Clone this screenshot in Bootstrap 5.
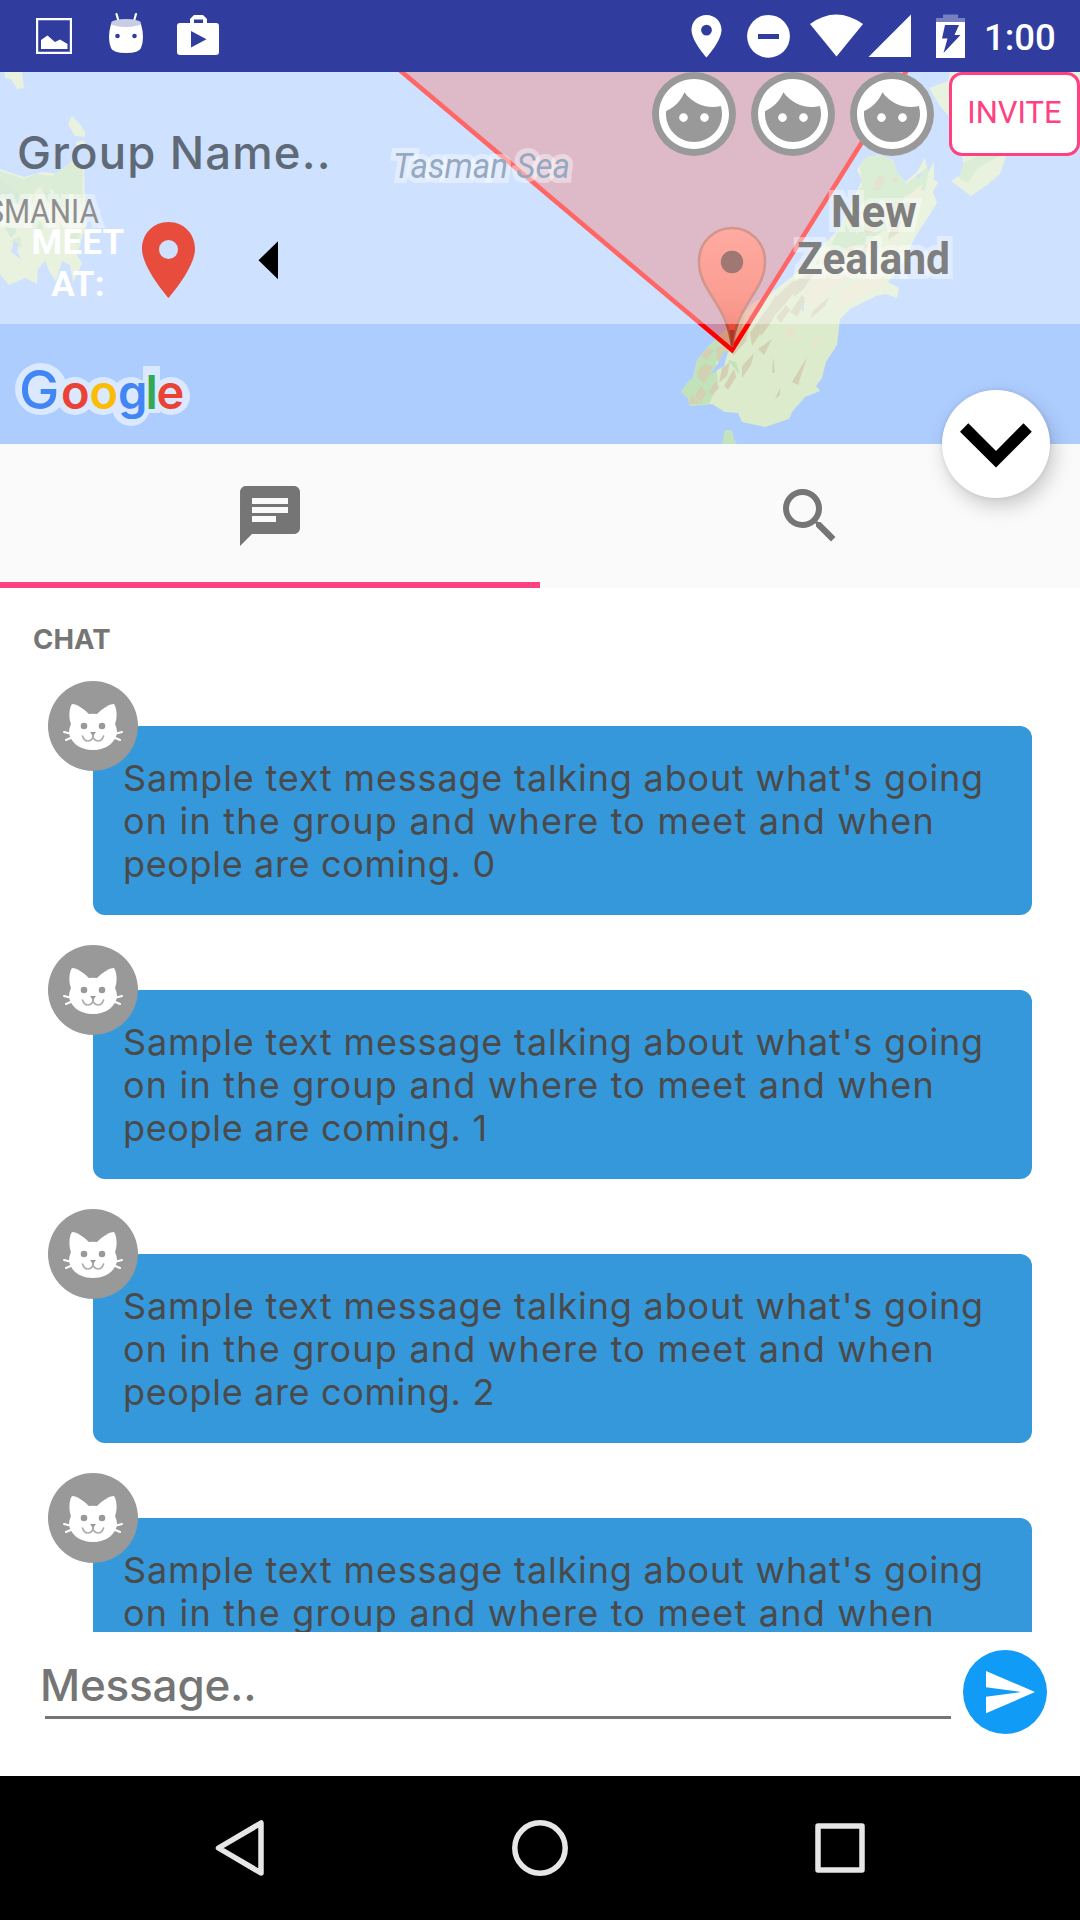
<!DOCTYPE html>
<html lang="en">
<head>
<meta charset="utf-8">
<meta name="viewport" content="width=device-width, initial-scale=1">
<title>Group chat</title>
<link href="https://cdn.jsdelivr.net/npm/bootstrap@5.3.0/dist/css/bootstrap.min.css" rel="stylesheet">
<style>
  body { font-family: Roboto, sans-serif; background: #fff; }
  svg { display: block; flex-shrink: 0; }
  .phone { width: 1080px; height: 1920px; }
  .geo { font-family: Inter, sans-serif; }

  .status { height: 72px; background: #303d9f; padding-right: 25px; }
  .status .clock { font-size: 36.5px; font-weight: 500; line-height: 72px; width: 71px; margin-left: -4px; padding-top: 3px; white-space: nowrap; }

  .map-area { height: 372px; background: #aecdff; }
  .map-svg { position: absolute; inset: 0; }
  .glass { height: 252px; background: rgba(255,255,255,.4); }
  .group-name { font-size: 45.5px; font-weight: 500; line-height: 60px; color: #5f6a76; margin: 51px 0 0 17px; width: 635px; letter-spacing: 1.15px; }
  .face { width: 84px; height: 84px; background: #999; margin-right: 15px; }
  .invite { width: 131px; height: 84px; border: 3px solid #ff4081; border-radius: 13px; color: #ff4081; background: #fff; font-size: 31px; padding: 0 0 3px; line-height: 1; }
  .meet { width: 96px; margin: 18px 0 0 30px; font-size: 35px; font-weight: 700; line-height: 42px; letter-spacing: .2px; padding-top: 21px; }

  .fab { position: absolute; left: 942px; top: 390px; width: 108px; height: 108px; z-index: 5; box-shadow: 4px 8px 20px rgba(0,0,0,.2), 0 0 4px rgba(0,0,0,.1); }

  .tabs-row { height: 144px; background: #fafafa; }
  .tabs-row .tab { border-bottom: 6px solid transparent; padding-top: 6px; }
  .tabs-row .tab.on { border-color: #ff4081; }

  .feed { height: 1044px; padding: 32px 48px 0; }
  .feed-title { font-size: 27.5px; font-weight: 700; color: #757575; line-height: 38px; margin: 0 0 23px -15px; letter-spacing: .1px; }
  .msg { height: 234px; margin-bottom: 30px; }
  .avatar { width: 90px; height: 90px; background: #999; z-index: 1; }
  .bubble { width: 939px; height: 189px; margin: -45px 0 0 45px; border-radius: 12px; background: #3498db; color: #4a4a4a; font-size: 36px; font-weight: 400; line-height: 43px; padding: 31px 0 0 30px; white-space: nowrap; }
  .bubble span { display: block; letter-spacing: .83px; }
  .bubble .l2 { letter-spacing: 1.19px; }
  .bubble .l3 { letter-spacing: .65px; }

  .composer { height: 144px; padding: 18px 33px 0 41px; }
  .composer .field { width: 906px; height: 69px; border: 0; border-bottom: 3px solid #757575; color: #757575; font-size: 44px; font-weight: 500; line-height: 66px; margin-left: 4px; padding: 2px 0 0; }
  .composer .field span { margin-left: -5px; letter-spacing: -.2px; }
  .send { width: 84px; height: 84px; background: #109cf6; margin-left: 12px; padding: 0; }

  .navkeys { height: 144px; }
</style>
</head>
<body>
<svg width="0" height="0" class="position-absolute">
  <symbol id="face" viewBox="0 0 24 24"><path fill="#fff" d="M9 11.75c-.69 0-1.25.56-1.25 1.25s.56 1.25 1.25 1.25 1.25-.56 1.25-1.25-.56-1.25-1.25-1.25zm6 0c-.69 0-1.25.56-1.25 1.25s.56 1.25 1.25 1.25 1.25-.56 1.25-1.25-.56-1.25-1.25-1.25zM12 2C6.48 2 2 6.48 2 12s4.48 10 10 10 10-4.48 10-10S17.52 2 12 2zm0 18c-4.41 0-8-3.59-8-8 0-.29.02-.58.05-.86 2.36-1.05 4.23-2.98 5.21-5.37C11.07 8.33 14.05 10 17.42 10c.78 0 1.53-.09 2.25-.26.21.71.33 1.47.33 2.26 0 4.41-3.59 8-8 8z"/></symbol>
  <symbol id="cat" viewBox="0 0 90 90">
    <path fill="#fff" d="M24 23C29 23 36 28 41 33Q45 32.500 49 33C54 28 61 23 66 23C69 27 69.500 37 67 43Q69 47 69 51C68 61 59 69 45 69C31 69 22 61 21 51Q21 47 23 43C20.500 37 21 27 24 23Z"/>
    <path fill="none" stroke="#fff" stroke-width="2" stroke-linecap="round" d="M16 51l8 2M18 59l7-3M74 51l-8 2M72 59l-7-3"/>
    <circle cx="36" cy="45" r="3.300" fill="#999"/><circle cx="54" cy="45" r="3.300" fill="#999"/>
    <path fill="#999" d="M42 51h6l-2.200 3v2h-1.600v-2z"/>
    <path fill="none" stroke="#aaa" stroke-width="1.600" stroke-linecap="round" d="M34.500 55Q36 60 40 60Q44 59.500 45 56Q46 59.500 50 60Q54 60 55.500 55"/>
  </symbol>
</svg>

<main class="phone d-flex flex-column position-relative overflow-hidden">
  <header class="status d-flex align-items-center text-white">
    <svg width="965" height="72" viewBox="0 0 965 72" fill="#fff" class="me-auto">
      <path fill-rule="evenodd" d="M36 18h36v36H36zM38.200 20.200v31.600h31.600V20.200z"/>
      <path d="M41 49v-9l6.500-4.500 7.500 6.500 5-2.500 7.500 4.500v5z"/>
      <path fill="none" stroke="#fff" stroke-width="2.200" stroke-linecap="round" d="M116.500 14l2 7M136 14l-2 7"/>
      <path d="M111 24Q126 28 141 24Q145 38 141 48Q139 53 126 53Q113 53 111 48Q107 38 111 24Z"/>
      <ellipse cx="126" cy="23" rx="15" ry="4" fill="#c9cce6"/>
      <circle cx="117.500" cy="36" r="2.300" fill="#303d9f"/><circle cx="134.500" cy="36" r="2.300" fill="#303d9f"/>
      <path fill-rule="evenodd" d="M180 23h10v-4l4-4h9l4 4v4h9q3 0 3 3v26q0 3-3 3h-36q-3 0-3-3V26q0-3 3-3zM194 23h9v-3.500h-9zM191 31v16.500l15.500-8.200z"/>
      <path fill-rule="evenodd" d="M706.500 15c-8.500 0-15 6.600-15 15 0 11 15 27.500 15 27.500s15-16.500 15-27.500c0-8.400-6.500-15-15-15zm0 9.700a5.400 5.400 0 1 1 0 10.800 5.400 5.400 0 0 1 0-10.800z"/>
      <circle cx="768.500" cy="36.300" r="21.400"/><path fill="#303d9f" d="M758 34h21v5h-21z"/>
      <path d="M810 24Q836 5 863 24L836.500 56.500z"/>
      <path d="M911 14.500V57h-42.500z"/>
      <path fill="#767fc0" d="M936 22V18h7v-3.500h15V18h7v4z"/>
      <path fill-rule="evenodd" d="M936 22h29v36h-29zM945 25h14l-4.500 10h6L943.500 53l4-14.500h-5.500z"/>
    </svg>
    <span class="clock text-end">1:00</span>
  </header>

  <section class="map-area position-relative overflow-hidden">
    <svg class="map-svg" width="1080" height="372" viewBox="0 72 1080 372">
      <defs>
        <linearGradient id="pin" x1="0" y1="0" x2="0" y2="1"><stop offset="0" stop-color="#ff7463"/><stop offset=".6" stop-color="#f85b48"/><stop offset="1" stop-color="#e83a28"/></linearGradient>
        <path id="south" d="M681 392L688 382L693 378L697 360L710 345L722 333L740 318L752 304L775 290L800 270L818 250L838 230L850 208L862 180L857 170L866 157L880 155L893 160L897 172L905 182L917 172L925 158L928 172L934 162L934 180L938 182L933 192L937 203L925 222L915 237L905 260L888 282L899 288L897 298L886 294L876 296L850 309L840 319L837 345L826 362L822 378L816 386L820 391L805 397L792 412L789 419L765 427L742 422L738 413L725 412L712 404L690 406L688 398Z"/>
        <clipPath id="southClip"><use href="#south"/></clipPath>
      </defs>
      <!-- Tasmania and the Bass Strait islands -->
      <path fill="#dbe8ca" d="M4 72h18l2 16-7 1-6-10-6-1zM68 124l4-8 8 8 5 8v5l-10-1zM76 142l8-2 2 7-9 0zM0 169l24 8 18-5 20 2 10-13 12 4 2 60-9 30 5 8-5 12-4 8-3-18-8-4-6 20-6-8-5-12-7 8-1 15-12-6-16 7-9-11-10-12z"/>
      <path fill="#c4e2bd" d="M0 171l24 8 12-5 16 2 18-13 13 3-1 30-22 15-20-25-18 20-22-8zM28 222l20-4-8 17zM10 241l10-5 2 12zM66 238l14-8-2 15z"/>
      <path fill="#bfdcc0" d="M0 180l15 10 12 14-26-2zM42 190l14 5 5 12-12-4zM3 225l16 4-8 9z"/>
      <path fill="#aecdff" d="M14 241l5 3-2 7 4 8-10-7z"/>
      <!-- South Island -->
      <use href="#south" fill="#dcebcb"/>
      <g clip-path="url(#southClip)">
        <path fill="#c2e2b9" d="M681 392L688 376L697 358L722 331L745 315L738 345L716 362L718 385L708 406L688 408ZM858 150H898L906 184L930 165L925 190L905 196L890 225L862 246L826 258L838 230L862 185ZM728 360l8 2 4 13-10-12z"/>
        <g fill="#d3d0b3">
          <path d="M697 372l7-8 9 2-8 17-6-4zM716 348l10-4 2 9-8 12-3-6zM695 396l6-10 5 7-5 10zM700 356l9-8 5 2-7 10zM688 404l4-9 8 9zM722 368l8-6-3 14-8 7zM708 392l8-11 3 7-7 7z"/>
          <path d="M733 340l17-17-4 18-13 15zM750 333l15-22-3 20-10 15zM758 323l18-28 7 6-13 23-9 12zM778 295l15-14 8 4-17 20-8 9zM795 281l20-10-11 18-10 8zM806 292l25-14-9 16-12 7zM776 318l10-13 4 5-9 13zM790 312l12-17 4 5-9 17zM742 366l12-13-3 12-9 13zM758 349l14-10-8 16zM724 386l10-17 2 8-8 13zM773 357l2 15-3 1zM792 382l15-25-9 28zM780 395l-5 4 5-11zM812 312l17-15-4 9-14 12z"/>
          <path d="M872 190l7-16 6 4-5 12zM892 181l5-7 1 9zM881 213l19-15-5 13-13 8zM902 206l9-6-1 11-7 5zM865 229l15-13-3 12-11 9zM890 229l11-8-3 12-10 7zM837 257l19-16-8 21zM858 253l11-12-2 15-9 8z"/>
        </g>
        <path fill="#e6e5cb" d="M814 272l29-15 22 11-24 15-28 25-9-8zM886 252l15-19-4 24-10 10zM908 196l15-13-4 15-10 8zM786 328l12-7-4 13-8 7zM812 342l10-6-9 16zM840 290l40-20 6 14-24 12-26 14z"/>
      </g>
      <path fill="#aecdff" d="M719 362l5-10 4-1-4 15-5 3-9 6 4-6zM802 300l2 10-2 2zM916 176l8-5-6 8z"/>
      <!-- North Island and Stewart Island -->
      <path fill="#dbe8ca" d="M929 88l19-7 2-9h130v22l-74 62-6 18-13 11-16 11-20-15 14-9-3-16-10-36-12-14z"/>
      <path fill="#c4e2bd" d="M964 162l14-6h22l-10 5-13 8-9 14-9-5z"/>
      <path fill="#c4e2bd" d="M725 430h7l2 9 3 5h-15z"/>
      <!-- area between members -->
      <path d="M401 72L732 351L906 72Z" fill="rgba(250,20,0,.35)"/>
      <path d="M396 67L732 350L909 67" fill="none" stroke="#ff0000" stroke-width="4.600"/>
      <path d="M732 347C729 323 721 311 713 298C704 284 699 275 699 261A33 33 0 0 1 765 261C765 275 760 284 751 298C743 311 735 323 732 347Z" fill="url(#pin)" stroke="#b4503f" stroke-width="2.600"/>
      <path d="M729.500 330h5l-2.500 18z" fill="#b03424"/>
      <circle cx="732" cy="262" r="11.200" fill="#5f1d17"/>
      <g font-family="Roboto, sans-serif" stroke="rgba(255,255,255,.42)" stroke-width="10" paint-order="stroke" stroke-linejoin="miter">
        <text x="393" y="178" font-size="34.500" font-style="italic" fill="#537096" textLength="177" lengthAdjust="spacingAndGlyphs">Tasman Sea</text>
        <text x="-50" y="222.500" font-size="33" fill="#444" textLength="149" lengthAdjust="spacingAndGlyphs">TASMANIA</text>
        <text x="831" y="226.500" font-size="44.500" font-weight="700" fill="#2a2a2a" textLength="86" lengthAdjust="spacingAndGlyphs">New</text>
        <text x="797" y="274" font-size="44.500" font-weight="700" fill="#2a2a2a" textLength="153" lengthAdjust="spacingAndGlyphs">Zealand</text>
      </g>
      <g fill="#dbe9ff"><circle cx="41" cy="389" r="26"/><circle cx="75" cy="396" r="19"/><circle cx="103" cy="396" r="19"/><circle cx="131" cy="396" r="19"/><circle cx="131" cy="407" r="19"/><path d="M143 366h17v47h-17z"/><circle cx="171" cy="396" r="19"/></g>
      <text y="409" x="19 61 89.500 118 145.500 156.500" font-family="Inter, sans-serif" font-size="47" font-weight="600" fill="#4285f4"><tspan font-size="54" font-weight="500">G</tspan><tspan fill="#ea4335">o</tspan><tspan fill="#fbbc05">o</tspan><tspan>g</tspan><tspan fill="#34a853">l</tspan><tspan fill="#ea4335">e</tspan></text>
    </svg>

    <div class="glass position-relative">
      <div class="d-flex align-items-start">
        <div class="group-name geo">Group Name..</div>
        <div class="face rounded-circle"><svg width="84" height="84"><use href="#face"/></svg></div>
        <div class="face rounded-circle"><svg width="84" height="84"><use href="#face"/></svg></div>
        <div class="face rounded-circle"><svg width="84" height="84"><use href="#face"/></svg></div>
        <button class="invite flex-shrink-0">INVITE</button>
      </div>
      <div class="d-flex align-items-start">
        <div class="meet text-white text-center">MEET<br>AT:</div>
        <svg width="170" height="120" viewBox="126 183 170 120">
          <path fill="#e74c3c" fill-rule="evenodd" d="M168.500 222C153 222 142 234 142 249C142 268 168.500 298 168.500 298S195 268 195 249C195 234 184 222 168.500 222zM168.500 240a9.500 9.500 0 1 1 0 19 9.500 9.500 0 0 1 0-19z"/>
          <path d="M258.500 260.300l19.500-19v38z"/>
        </svg>
      </div>
    </div>
  </section>

  <button class="fab btn p-0 bg-white rounded-circle border-0" aria-label="Collapse map">
    <svg width="108" height="108" viewBox="942 390 108 108"><path d="M960 431.700l8.300-8.400L996 451l27.500-27.700 8.300 8.400L996 467.500z"/></svg>
  </button>

  <nav class="tabs-row d-flex">
    <a class="tab on w-50 d-flex align-items-center justify-content-center" href="#" aria-label="Chat"><svg width="72" height="72" viewBox="0 0 24 24" fill="#757575"><path d="M20 2H4c-1.100 0-1.990.9-1.990 2L2 22l4-4h14c1.100 0 2-.9 2-2V4c0-1.100-.9-2-2-2zM6 9h12v2H6V9zm8 5H6v-2h8v2zm4-6H6V6h12v2z"/></svg></a>
    <a class="tab w-50 d-flex align-items-center justify-content-center" href="#" aria-label="Search"><svg width="72" height="72" viewBox="0 0 24 24" fill="#757575"><path d="M15.500 14h-.79l-.28-.27A6.471 6.471 0 0 0 16 9.500 6.500 6.500 0 1 0 9.500 16c1.610 0 3.090-.59 4.230-1.570l.27.280v.79l5 4.990L20.490 19l-4.990-5zm-6 0C7.010 14 5 11.990 5 9.500S7.010 5 9.500 5 14 7.010 14 9.500 11.990 14 9.500 14z"/></svg></a>
  </nav>

  <section class="feed overflow-hidden geo">
    <h2 class="feed-title">CHAT</h2>
    <article class="msg"><div class="avatar rounded-circle position-relative"><svg width="90" height="90"><use href="#cat"/></svg></div>
      <div class="bubble"><span class="l1">Sample text message talking about what's going</span><span class="l2">on in the group and where to meet and when</span><span class="l3">people are coming. 0</span></div></article>
    <article class="msg"><div class="avatar rounded-circle position-relative"><svg width="90" height="90"><use href="#cat"/></svg></div>
      <div class="bubble"><span class="l1">Sample text message talking about what's going</span><span class="l2">on in the group and where to meet and when</span><span class="l3">people are coming. 1</span></div></article>
    <article class="msg"><div class="avatar rounded-circle position-relative"><svg width="90" height="90"><use href="#cat"/></svg></div>
      <div class="bubble"><span class="l1">Sample text message talking about what's going</span><span class="l2">on in the group and where to meet and when</span><span class="l3">people are coming. 2</span></div></article>
    <article class="msg"><div class="avatar rounded-circle position-relative"><svg width="90" height="90"><use href="#cat"/></svg></div>
      <div class="bubble"><span class="l1">Sample text message talking about what's going</span><span class="l2">on in the group and where to meet and when</span></div></article>
  </section>

  <footer class="composer d-flex align-items-start geo">
    <div class="field flex-shrink-0 mt-0"><span>Message..</span></div>
    <button class="send btn rounded-circle border-0 flex-shrink-0" aria-label="Send"><svg width="84" height="84" viewBox="963 1650 84 84"><path fill="#fff" d="M986 1713.300L1035 1692l-49-21v16.300l35 4.700-35 4.700z"/></svg></button>
  </footer>

  <nav class="navkeys bg-black">
    <svg width="1080" height="144" viewBox="0 1776 1080 144" fill="none" stroke="#e6e6e6" stroke-width="5.500" stroke-linejoin="round">
      <path d="M261 1823v50l-42.500-25z"/><circle cx="540" cy="1848" r="25.200"/><rect x="818" y="1826" width="44" height="44"/>
    </svg>
  </nav>
</main>
<script src="https://cdn.jsdelivr.net/npm/bootstrap@5.3.0/dist/js/bootstrap.bundle.min.js"></script>
</body>
</html>
